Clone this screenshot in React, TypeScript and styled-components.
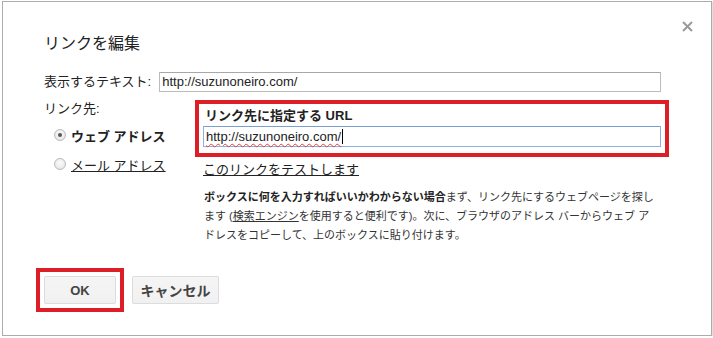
import React from "react";
import styled, { createGlobalStyle } from "styled-components";

const GlobalStyle = createGlobalStyle`
  html, body {
    margin: 0;
    padding: 0;
    background: #fff;
  }
  body {
    font-family: "Liberation Sans", Arial, "Noto Sans CJK JP", sans-serif;
    color: #222;
  }
`;

const Dialog = styled.div`
  box-sizing: border-box;
  position: relative;
  margin: 1px 0 0 2px;
  width: 710px;
  height: 335px;
  border: 1px solid #acacac;
  box-shadow: 1px 1px 1px rgba(0, 0, 0, 0.12);
  background: #fff;
  padding: 32px 41px 0;
`;

const Close = styled.button`
  position: absolute;
  top: 17px;
  right: 17px;
  width: 14px;
  height: 14px;
  padding: 0;
  border: 0;
  background: none;
  cursor: pointer;
  display: flex;
  align-items: center;
  justify-content: center;
`;

const Title = styled.h1`
  margin: 0;
  font-size: 16px;
  line-height: 20px;
  font-weight: normal;
  color: #222;
`;

const TextRow = styled.div`
  margin-top: 18px;
  display: flex;
  align-items: center;
  gap: 8px;
`;

const Label = styled.span`
  font-size: 13px;
  line-height: 16px;
  white-space: nowrap;
`;

const TextInput = styled.div<{ focused?: boolean; width: number }>`
  box-sizing: border-box;
  flex: none;
  width: ${({ width }) => width}px;
  height: ${({ focused }) => (focused ? "21px" : "20px")};
  border: 1px solid ${({ focused }) => (focused ? "#8fb0dc" : "#bcbcbc")};
  border-top-color: ${({ focused }) => (focused ? "#7a9fd2" : "#a8a8a8")};
  padding: 0 2px;
  font-size: 13px;
  line-height: ${({ focused }) => (focused ? "19px" : "18px")};
  color: #222;
  display: flex;
  align-items: center;
  white-space: nowrap;
`;

const Spelled = styled.span`
  text-decoration: underline wavy #e04040;
  text-decoration-thickness: 1px;
  text-underline-offset: 2px;
`;

const Caret = styled.span`
  display: inline-block;
  width: 1px;
  height: 15px;
  margin-left: 1px;
  background: #000;
`;

const TargetRow = styled.div`
  margin-top: 8px;
  display: flex;
`;

const LeftColumn = styled.div`
  width: 151px;
  flex: none;
  display: flex;
  flex-direction: column;
`;

const TargetLabel = styled(Label)`
  margin-top: 1px;
`;

const RadioRow = styled.label<{ gap: number }>`
  margin-top: ${({ gap }) => gap}px;
  margin-left: 10px;
  height: 20px;
  display: flex;
  align-items: center;
  gap: 5px;
  font-size: 13px;
  white-space: nowrap;
`;

const RadioDot = styled.span<{ checked?: boolean }>`
  box-sizing: border-box;
  width: 12px;
  height: 12px;
  border-radius: 50%;
  border: 1px solid #b9b9b9;
  background: radial-gradient(circle at 50% 40%, #fbfbfb 0%, #e2e2e2 100%);
  display: flex;
  align-items: center;
  justify-content: center;
  &::after {
    content: "";
    display: ${({ checked }) => (checked ? "block" : "none")};
    width: 4px;
    height: 4px;
    border-radius: 50%;
    background: #555;
  }
`;

const RadioText = styled.span<{ active?: boolean }>`
  font-weight: ${({ active }) => (active ? "bold" : "normal")};
  text-decoration: ${({ active }) => (active ? "none" : "underline")};
  color: #222;
`;

const RightColumn = styled.div`
  width: 474px;
  display: flex;
  flex-direction: column;
`;

const Highlight = styled.div`
  box-sizing: border-box;
  border: 4px solid #dc1f26;
  padding: 4px 4px 6px 4px;
`;

const UrlLabel = styled.div`
  font-size: 13px;
  line-height: 16px;
  font-weight: bold;
  padding-left: 2px;
  margin-bottom: 2px;
`;

const TestLink = styled.a`
  margin: 5px 0 0 8px;
  font-size: 13px;
  line-height: 16px;
  color: #222;
  text-decoration: underline;
  align-self: flex-start;
`;

const Help = styled.p`
  margin: 10px 0 0 9px;
  font-size: 11px;
  line-height: 19px;
  color: #333;
  white-space: nowrap;
  b {
    color: #222;
  }
  u {
    text-decoration: underline;
  }
`;

const Buttons = styled.div`
  margin: 23px 0 0 -8px;
  display: flex;
  align-items: center;
  gap: 8px;
`;

const Marked = styled.div`
  border: 4px solid #dc1f26;
  padding: 4px;
`;

const Button = styled.button<{ width: number; size: number }>`
  box-sizing: border-box;
  width: ${({ width }) => width}px;
  height: 28px;
  border: 1px solid #dcdcdc;
  border-radius: 2px;
  background: linear-gradient(#f5f5f5, #f1f1f1);
  color: #444;
  font-family: inherit;
  font-size: ${({ size }) => size}px;
  font-weight: bold;
  padding: 0;
  cursor: pointer;
`;

export default function App() {
  return (
    <>
      <GlobalStyle />
      <Dialog>
        <Close aria-label="閉じる">
          <svg width="11" height="11" viewBox="0 0 11 11">
            <path d="M1 1L10 10M10 1L1 10" stroke="#9a9a9a" strokeWidth="2" />
          </svg>
        </Close>
        <Title>リンクを編集</Title>
        <TextRow>
          <Label>表示するテキスト:</Label>
          <TextInput width={502}>http://suzunoneiro.com/</TextInput>
        </TextRow>
        <TargetRow>
          <LeftColumn>
            <TargetLabel>リンク先:</TargetLabel>
            <RadioRow gap={8}>
              <RadioDot checked />
              <RadioText active>ウェブ アドレス</RadioText>
            </RadioRow>
            <RadioRow gap={9}>
              <RadioDot />
              <RadioText>メール アドレス</RadioText>
            </RadioRow>
          </LeftColumn>
          <RightColumn>
            <Highlight>
              <UrlLabel>リンク先に指定する URL</UrlLabel>
              <TextInput focused width={458}>
                <Spelled>http://suzunoneiro.com/</Spelled>
                <Caret />
              </TextInput>
            </Highlight>
            <TestLink href="#">このリンクをテストします</TestLink>
            <Help>
              <b>ボックスに何を入力すればいいかわからない場合</b>
              まず、リンク先にするウェブページを探し
              <br />
              ます (<u>検索エンジン</u>を使用すると便利です)。次に、ブラウザのアドレス バーからウェブ ア
              <br />
              ドレスをコピーして、上のボックスに貼り付けます。
            </Help>
          </RightColumn>
        </TargetRow>
        <Buttons>
          <Marked>
            <Button width={72} size={13}>OK</Button>
          </Marked>
          <Button width={87} size={14}>キャンセル</Button>
        </Buttons>
      </Dialog>
    </>
  );
}
